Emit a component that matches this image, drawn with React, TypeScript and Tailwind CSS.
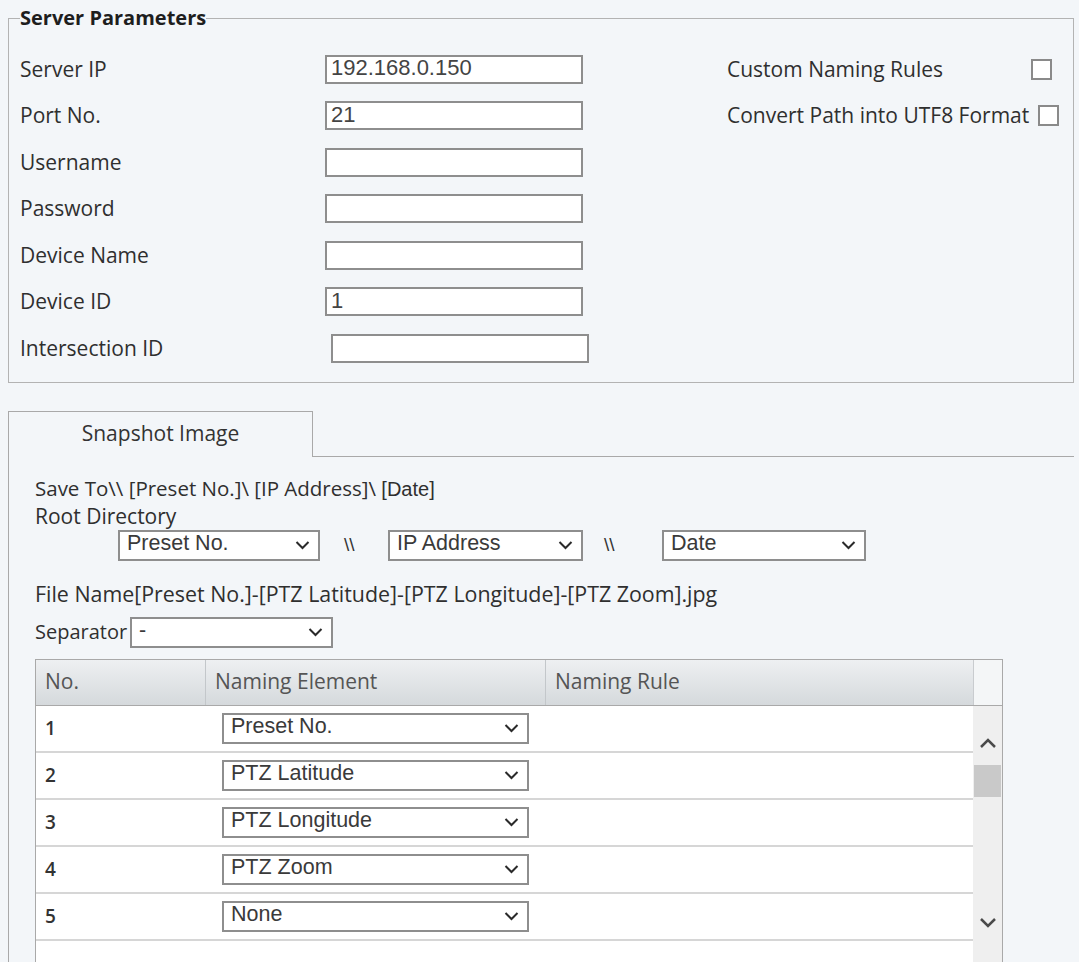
import React from "react";

const LABEL_FONT = "font-['Open_Sans','Noto_Sans',sans-serif]";
const ARIAL = "font-['Liberation_Sans',Arial,sans-serif]";

function Chevron({ className = "" }: { className?: string }) {
  return (
    <svg width="15" height="10" viewBox="0 0 15 10" className={className}>
      <polyline points="1.5,2 7.5,8 13.5,2" fill="none" stroke="#2a2a2a" strokeWidth="2" />
    </svg>
  );
}

function Select({ value, w, h = "h-[31px]" }: { value: string; w: string; h?: string }) {
  return (
    <div
      className={`${w} ${h} flex items-center justify-between bg-white border-2 border-[#8e8e8e] pl-[7px] pr-[8px] ${ARIAL} text-[21.5px] text-[#3a3a3a] shrink-0`}
    >
      <span className="leading-none -mt-[2px]">{value}</span>
      <Chevron />
    </div>
  );
}

function TextInput({ value, extra = "" }: { value?: string; extra?: string }) {
  return (
    <div
      className={`w-[258px] h-[29px] bg-white border-2 border-[#8e8e8e] pl-[4px] flex items-center ${ARIAL} text-[22px] text-[#444] ${extra}`}
    >
      <span className="leading-none -mt-[2px]">{value}</span>
    </div>
  );
}

function Checkbox() {
  return <div className="w-[21px] h-[21px] bg-white border-2 border-[#8a8a8a] shrink-0" />;
}

const fields: { label: string; value?: string; extra?: string }[] = [
  { label: "Server IP", value: "192.168.0.150" },
  { label: "Port No.", value: "21" },
  { label: "Username" },
  { label: "Password" },
  { label: "Device Name" },
  { label: "Device ID", value: "1" },
  { label: "Intersection ID", extra: "ml-[6px]" },
];

const rows = [
  { no: "1", el: "Preset No." },
  { no: "2", el: "PTZ Latitude" },
  { no: "3", el: "PTZ Longitude" },
  { no: "4", el: "PTZ Zoom" },
  { no: "5", el: "None" },
];

export default function App() {
  return (
    <div className={`w-[1079px] h-[962px] overflow-hidden bg-[#f3f6f9] text-[#333] ${LABEL_FONT}`}>
      {/* Server Parameters */}
      <fieldset className="ml-[8px] mt-[6px] w-[1066px] border border-[#b3b3b3] px-[11px] pt-[16px] pb-[10px]">
        <legend className="font-bold text-[20px] leading-[24px] text-[#1e1e1e]">Server Parameters</legend>
        <div className="flex">
          <div className="w-[707px] flex flex-col">
            {fields.map((f) => (
              <div key={f.label} className="h-[46.5px] flex items-center">
                <div className="w-[305px] text-[21px] text-[#2f2f2f]">{f.label}</div>
                <TextInput value={f.value} extra={f.extra} />
              </div>
            ))}
          </div>
          <div className="flex flex-col">
            <div className="h-[46.5px] flex items-center">
              <div className="w-[304px] text-[21px] text-[#2f2f2f] whitespace-nowrap">Custom Naming Rules</div>
              <Checkbox />
            </div>
            <div className="h-[46.5px] flex items-center">
              <div className="text-[21px] text-[#2f2f2f] mr-[9px] whitespace-nowrap">Convert Path into UTF8 Format</div>
              <Checkbox />
            </div>
          </div>
        </div>
      </fieldset>

      {/* Tabs */}
      <div className="mt-[28px] ml-[8px] flex">
        <div className="w-[305px] h-[46px] border-t border-l border-r border-[#a9a9a9] flex items-center justify-center text-[21px] text-[#333]">
          Snapshot Image
        </div>
        <div className="w-[761px] h-[46px] border-b border-[#a9a9a9]" />
      </div>

      {/* Tab panel */}
      <div className="ml-[8px] border-l border-[#a9a9a9] pl-[26px] pt-[18px] h-[600px]">
        <div className="text-[20.5px] leading-[27px] text-[#2f2f2f] whitespace-nowrap">
          Save To\\ [Preset No.]\ [IP Address]\ <span className={`${ARIAL} text-[20px]`}>[Date]</span>
        </div>
        <div className="text-[21px] leading-[27px] text-[#2f2f2f]">Root Directory</div>
        <div className="flex items-center">
          <div className="w-[83px] shrink-0" />
          <Select value="Preset No." w="w-[202px]" />
          <div className={`w-[68px] pl-[24px] ${ARIAL} text-[19px] text-[#333] shrink-0`}>\\</div>
          <Select value="IP Address" w="w-[195px]" />
          <div className={`w-[79px] pl-[21px] ${ARIAL} text-[19px] text-[#333] shrink-0`}>\\</div>
          <Select value="Date" w="w-[204px]" />
        </div>

        <div className="mt-[19px] text-[21.4px] leading-[27px] text-[#2f2f2f] whitespace-nowrap">
          File Name[Preset No.]-[PTZ Latitude]-[PTZ Longitude]-[PTZ Zoom].jpg
        </div>
        <div className="mt-[10px] flex items-center">
          <div className="w-[95px] text-[20px] text-[#2f2f2f] whitespace-nowrap">Separator</div>
          <Select value="-" w="w-[203px]" />
        </div>

        {/* Table */}
        <div className="mt-[11px] w-[968px] border border-[#a9a9a9] bg-white">
          <div className="h-[46px] flex bg-gradient-to-b from-[#eef0f2] to-[#d5d9dc] border-b border-[#a9a9a9] text-[21px] text-[#555]">
            <div className="w-[170px] pl-[9px] flex items-center border-r border-[#c3c7ca]">No.</div>
            <div className="w-[340px] pl-[9px] flex items-center border-r border-[#c3c7ca]">Naming Element</div>
            <div className="w-[427px] pl-[9px] flex items-center">Naming Rule</div>
            <div className="flex-1 bg-[#f4f6f7] border-l border-[#c9cccf]" />
          </div>
          <div className="flex">
            <div className="w-[937px]">
              {rows.map((r) => (
                <div key={r.no} className="h-[47px] flex items-center border-b-2 border-[#d6d6d6]">
                  <div className="w-[170px] pl-[9px] text-[19px] font-semibold text-[#333]">{r.no}</div>
                  <div className="pl-[16px]">
                    <Select value={r.el} w="w-[307px]" />
                  </div>
                </div>
              ))}
              <div className="h-[47px]" />
            </div>
            <div className="flex-1 bg-[#efefef] flex flex-col items-center pt-[31px]">
              <svg width="18" height="12" viewBox="0 0 18 12">
                <polyline points="2,10 9,3 16,10" fill="none" stroke="#4a4a4a" strokeWidth="2.5" />
              </svg>
              <div className="mt-[16px] w-[27px] h-[32px] bg-[#c9c9c9]" />
              <svg width="18" height="12" viewBox="0 0 18 12" className="mt-[120px]">
                <polyline points="2,2 9,9 16,2" fill="none" stroke="#4a4a4a" strokeWidth="2.5" />
              </svg>
            </div>
          </div>
        </div>
      </div>
    </div>
  );
}
